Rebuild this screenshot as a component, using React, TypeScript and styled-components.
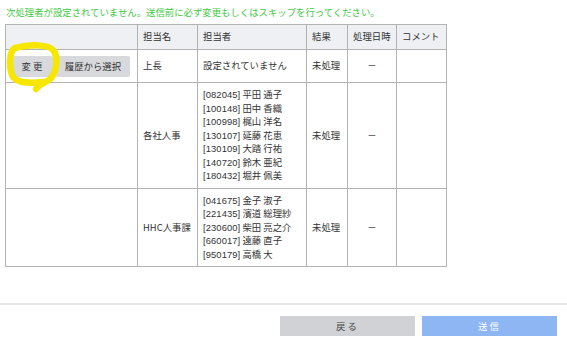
import React from "react";
import styled, { createGlobalStyle } from "styled-components";

const Global = createGlobalStyle`
  html, body { margin: 0; padding: 0; background: #fff; }
  body { font-family: "Noto Sans CJK JP", "Noto Sans", sans-serif; color: #333; }
`;

const Page = styled.div`
  width: 567px;
  height: 345px;
  display: flex;
  flex-direction: column;
  box-sizing: border-box;
  overflow: hidden;
`;

const Warning = styled.div`
  color: #3fc93f;
  font-size: 9.4px;
  line-height: 12px;
  padding: 6px 0 0 6px;
  height: 18px;
  box-sizing: border-box;
`;

const TableWrap = styled.div`
  padding: 6px 0 0 5px;
`;

const Table = styled.table`
  border-collapse: collapse;
  table-layout: fixed;
  width: 441px;
  font-size: 9.4px;
  line-height: 13.5px;
  color: #333;
`;

const Th = styled.th<{ $w: number }>`
  width: ${(p) => p.$w}px;
  height: 25px;
  background: #eef0f3;
  border: 1px solid #b3b3b3;
  font-weight: normal;
  text-align: left;
  padding: 0 5px;
  box-sizing: border-box;
  white-space: nowrap;
`;

const Td = styled.td<{ $center?: boolean }>`
  border: 1px solid #b3b3b3;
  padding: 5px 5px;
  vertical-align: middle;
  text-align: ${(p) => (p.$center ? "center" : "left")};
  white-space: nowrap;
  box-sizing: border-box;
`;

const Mono = styled.span`
  font-family: "Liberation Sans", "Noto Sans CJK JP", sans-serif;
  letter-spacing: 0.1px;
`;

const ActionCell = styled.td`
  border: 1px solid #b3b3b3;
  padding: 0 0 0 7px;
  position: relative;
  vertical-align: middle;
  height: 33px;
  box-sizing: border-box;
`;

const ButtonRow = styled.div`
  display: flex;
  gap: 3px;
  align-items: center;
`;

const SmallButton = styled.button<{ $w: number }>`
  width: ${(p) => p.$w}px;
  height: 21px;
  border: none;
  border-radius: 2px;
  background: #d7d9dc;
  color: #333;
  font-family: inherit;
  font-size: 9.4px;
  padding: 0;
  letter-spacing: ${(p) => (p.$w < 50 ? "2px" : "0")};
`;

const Highlight = styled.svg`
  position: absolute;
  left: -5px;
  top: -8px;
  pointer-events: none;
`;

const Spacer = styled.div`
  flex: 1;
`;

const Divider = styled.div`
  height: 2px;
  background: #e6e6e6;
`;

const Footer = styled.div`
  display: flex;
  justify-content: flex-end;
  gap: 7px;
  padding: 11px 10px 9px 0;
`;

const FooterButton = styled.button<{ $primary?: boolean }>`
  width: 135px;
  height: 20px;
  border: none;
  background: ${(p) => (p.$primary ? "#8db6f2" : "#d0d2d5")};
  color: ${(p) => (p.$primary ? "#fff" : "#444")};
  font-family: inherit;
  font-size: 9.4px;
  letter-spacing: 2px;
  padding: 0;
`;

const groups = [
  {
    name: "各社人事",
    people: [
      ["082045", "平田 通子"],
      ["100148", "田中 香織"],
      ["100998", "梶山 洋名"],
      ["130107", "延藤 花恵"],
      ["130109", "大踏 行祐"],
      ["140720", "鈴木 亜紀"],
      ["180432", "堀井 佩美"],
    ],
  },
  {
    name: "HHC人事課",
    people: [
      ["041675", "金子 淑子"],
      ["221435", "濱道 総理紗"],
      ["230600", "柴田 亮之介"],
      ["660017", "遠藤 直子"],
      ["950179", "高橋 大"],
    ],
  },
];

export default function App() {
  return (
    <Page>
      <Global />
      <Warning>次処理者が設定されていません。送信前に必ず変更もしくはスキップを行ってください。</Warning>
      <TableWrap>
        <Table>
          <thead>
            <tr>
              <Th $w={132}></Th>
              <Th $w={60}>担当名</Th>
              <Th $w={109}>担当者</Th>
              <Th $w={41}>結果</Th>
              <Th $w={49}>処理日時</Th>
              <Th $w={50}>コメント</Th>
            </tr>
          </thead>
          <tbody>
            <tr>
              <ActionCell>
                <ButtonRow>
                  <SmallButton $w={40}>変更</SmallButton>
                  <SmallButton $w={74}>履歴から選択</SmallButton>
                </ButtonRow>
                <Highlight width="64" height="54" viewBox="0 0 64 54">
                  <path
                    d="M14 6 C28 2, 48 2, 53 9 C57 16, 56 32, 48 38 C43 41, 38 42, 35 47 M14 6 C8 9, 8 25, 11 33 C14 40, 26 42, 42 40"
                    fill="none"
                    stroke="#f7e600"
                    strokeWidth="6.5"
                    strokeLinecap="round"
                    strokeLinejoin="round"
                  />
                </Highlight>
              </ActionCell>
              <Td>上長</Td>
              <Td>設定されていません</Td>
              <Td>未処理</Td>
              <Td $center>－</Td>
              <Td></Td>
            </tr>
            {groups.map((g) => (
              <tr key={g.name}>
                <Td></Td>
                <Td>{g.name}</Td>
                <Td>
                  {g.people.map(([id, n]) => (
                    <div key={id}>
                      <Mono>[{id}]</Mono> {n}
                    </div>
                  ))}
                </Td>
                <Td>未処理</Td>
                <Td $center>－</Td>
                <Td></Td>
              </tr>
            ))}
          </tbody>
        </Table>
      </TableWrap>
      <Spacer />
      <Divider />
      <Footer>
        <FooterButton>戻る</FooterButton>
        <FooterButton $primary>送信</FooterButton>
      </Footer>
    </Page>
  );
}
